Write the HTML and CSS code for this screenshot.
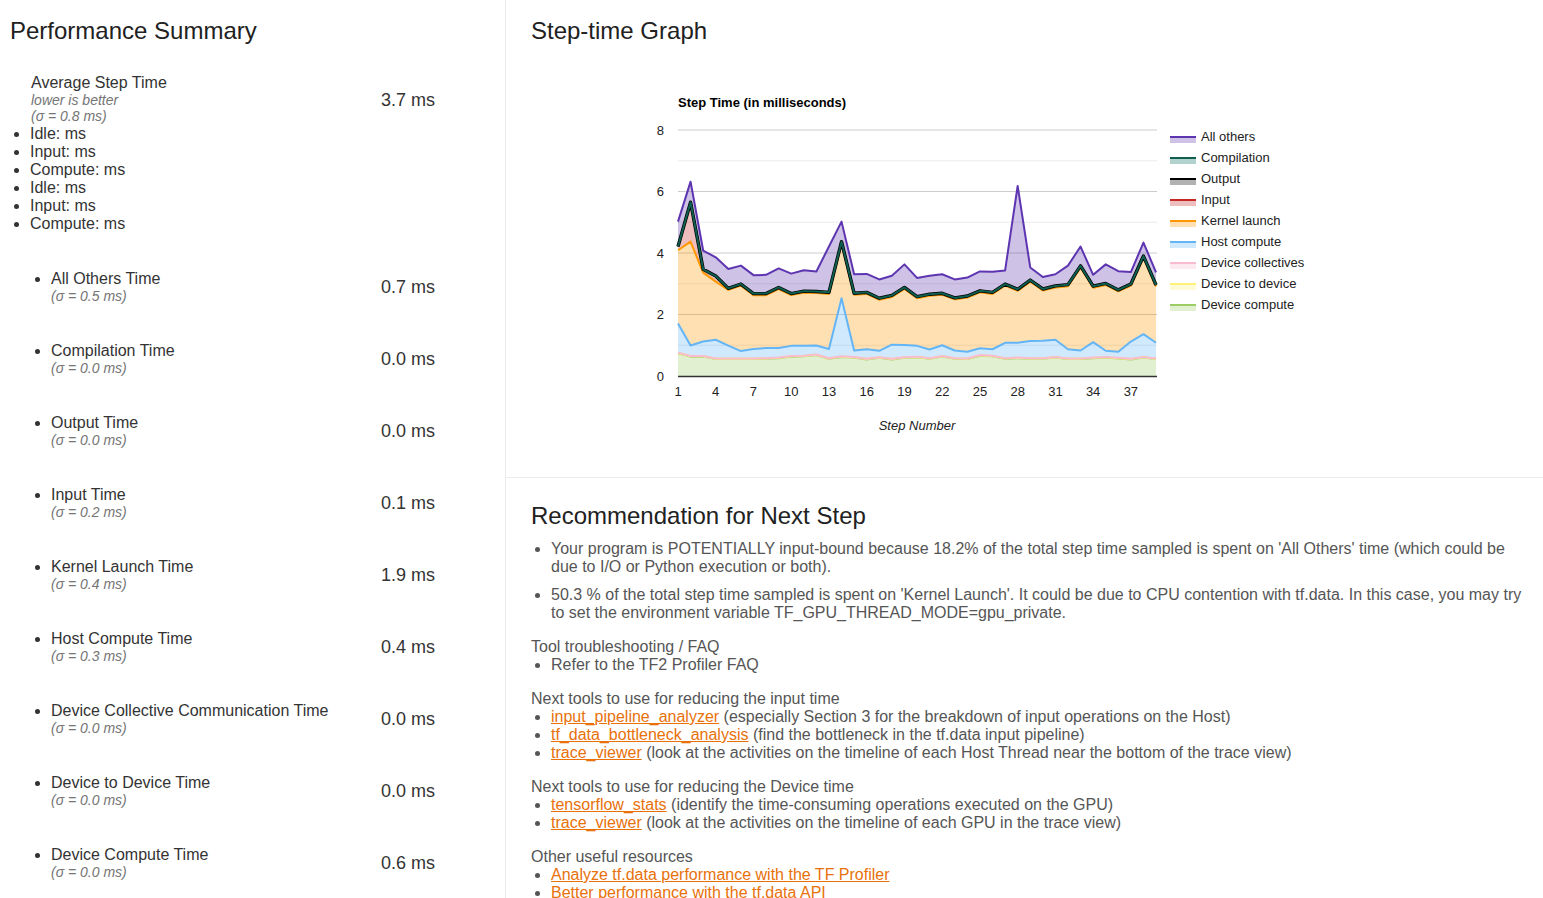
FILE: index.html
```html
<!DOCTYPE html>
<html lang="en">
<head>
<meta charset="utf-8">
<title>Overview</title>
<link rel="stylesheet" href="styles.css">
</head>
<body>
<div class="page">
  <section class="summary">
    <h2 class="title">Performance Summary</h2>
    <div class="avg">
      <div class="metric metric-avg">
        <div class="metric-label">
          <div class="metric-name">Average Step Time</div>
          <div class="note">lower is better</div>
          <div class="note">(σ = 0.8 ms)</div>
        </div>
        <div class="metric-value">3.7 ms</div>
      </div>
    </div>
    <ul class="breakdown">
      <li>Idle: ms</li>
      <li>Input: ms</li>
      <li>Compute: ms</li>
      <li>Idle: ms</li>
      <li>Input: ms</li>
      <li>Compute: ms</li>
    </ul>
    <ul class="metrics">
      <li><div class="metric"><div class="metric-label"><div class="metric-name">All Others Time</div><div class="note">(σ = 0.5 ms)</div></div><div class="metric-value">0.7 ms</div></div></li>
      <li><div class="metric"><div class="metric-label"><div class="metric-name">Compilation Time</div><div class="note">(σ = 0.0 ms)</div></div><div class="metric-value">0.0 ms</div></div></li>
      <li><div class="metric"><div class="metric-label"><div class="metric-name">Output Time</div><div class="note">(σ = 0.0 ms)</div></div><div class="metric-value">0.0 ms</div></div></li>
      <li><div class="metric"><div class="metric-label"><div class="metric-name">Input Time</div><div class="note">(σ = 0.2 ms)</div></div><div class="metric-value">0.1 ms</div></div></li>
      <li><div class="metric"><div class="metric-label"><div class="metric-name">Kernel Launch Time</div><div class="note">(σ = 0.4 ms)</div></div><div class="metric-value">1.9 ms</div></div></li>
      <li><div class="metric"><div class="metric-label"><div class="metric-name">Host Compute Time</div><div class="note">(σ = 0.3 ms)</div></div><div class="metric-value">0.4 ms</div></div></li>
      <li><div class="metric"><div class="metric-label"><div class="metric-name">Device Collective Communication Time</div><div class="note">(σ = 0.0 ms)</div></div><div class="metric-value">0.0 ms</div></div></li>
      <li><div class="metric"><div class="metric-label"><div class="metric-name">Device to Device Time</div><div class="note">(σ = 0.0 ms)</div></div><div class="metric-value">0.0 ms</div></div></li>
      <li><div class="metric"><div class="metric-label"><div class="metric-name">Device Compute Time</div><div class="note">(σ = 0.0 ms)</div></div><div class="metric-value">0.6 ms</div></div></li>
    </ul>
  </section>
  <main class="right">
    <section class="graph">
      <h2 class="title">Step-time Graph</h2>
      <svg id="chart" class="chart" width="997" height="417" viewBox="0 0 997 417" xmlns="http://www.w3.org/2000/svg"></svg>
    </section>
    <section class="rec">
      <h2 class="title">Recommendation for Next Step</h2>
      <ul class="rec-list">
        <li>Your program is POTENTIALLY input-bound because 18.2% of the total step time sampled is spent on 'All Others' time (which could be due to I/O or Python execution or both).</li>
        <li>50.3 % of the total step time sampled is spent on 'Kernel Launch'. It could be due to CPU contention with tf.data. In this case, you may try to set the environment variable TF_GPU_THREAD_MODE=gpu_private.</li>
      </ul>
      <div class="block">
        <div class="block-title">Tool troubleshooting / FAQ</div>
        <ul class="block-list">
          <li>Refer to the TF2 Profiler FAQ</li>
        </ul>
      </div>
      <div class="block">
        <div class="block-title">Next tools to use for reducing the input time</div>
        <ul class="block-list">
          <li><a class="link" href="#">input_pipeline_analyzer</a> (especially Section 3 for the breakdown of input operations on the Host)</li>
          <li><a class="link" href="#">tf_data_bottleneck_analysis</a> (find the bottleneck in the tf.data input pipeline)</li>
          <li><a class="link" href="#">trace_viewer</a> (look at the activities on the timeline of each Host Thread near the bottom of the trace view)</li>
        </ul>
      </div>
      <div class="block">
        <div class="block-title">Next tools to use for reducing the Device time</div>
        <ul class="block-list">
          <li><a class="link" href="#">tensorflow_stats</a> (identify the time-consuming operations executed on the GPU)</li>
          <li><a class="link" href="#">trace_viewer</a> (look at the activities on the timeline of each GPU in the trace view)</li>
        </ul>
      </div>
      <div class="block">
        <div class="block-title">Other useful resources</div>
        <ul class="block-list">
          <li><a class="link" href="#">Analyze tf.data performance with the TF Profiler</a></li>
          <li><a class="link" href="#">Better performance with the tf.data API</a></li>
        </ul>
      </div>
    </section>
  </main>
</div>
<script src="script.js"></script>
</body>
</html>
```

FILE: styles.css
```css
* { box-sizing: border-box; }
html, body {
  margin: 0;
  padding: 0;
  background: #ffffff;
}
body {
  font-family: "Liberation Sans", Arial, sans-serif;
  color: #333333;
}
.page {
  display: flex;
  align-items: stretch;
  width: 1543px;
}
.summary {
  flex: 0 0 506px;
  width: 506px;
  padding: 17px 0 0 10px;
  border-right: 1px solid #ebebeb;
}
.title {
  margin: 0;
  font-size: 24px;
  line-height: 28px;
  font-weight: normal;
  color: #212121;
}
.avg {
  margin-top: 28px;
  padding-left: 21px;
}
.metric {
  display: flex;
  align-items: center;
}
.metric-label {
  flex: 0 0 330px;
  width: 330px;
  padding-bottom: 1px;
}
.metric-avg .metric-label {
  flex-basis: 350px;
  width: 350px;
}
.metric-name {
  font-size: 16px;
  line-height: 20px;
  margin-bottom: -1px;
  color: #333333;
}
.note {
  font-size: 14px;
  line-height: 16px;
  font-style: italic;
  color: #757575;
}
.metric-value {
  font-size: 18px;
  line-height: 20px;
  color: #333333;
}
.metric-avg .metric-value {
  margin-top: 2px;
}
.breakdown {
  margin: 0;
  padding-left: 20px;
  font-size: 16px;
  line-height: 18px;
  color: #333333;
}
.metrics {
  margin: 36px 0 0 0;
  padding-left: 41px;
}
.metrics li {
  margin-bottom: 36px;
}
.right {
  flex: 1 1 auto;
  min-width: 0;
}
.graph {
  padding: 17px 15px 0 25px;
  border-bottom: 1px solid #ebebeb;
}
.chart {
  display: block;
  margin-top: 15px;
  font-family: "Liberation Sans", Arial, sans-serif;
}
.rec {
  padding: 24px 15px 0 25px;
  font-size: 16px;
  line-height: 18px;
  color: #555555;
}
.rec-list {
  margin: 10px 0 0 0;
  padding-left: 20px;
}
.rec-list li + li {
  margin-top: 10px;
}
.block {
  margin-top: 16px;
}
.block-list {
  margin: 0;
  padding-left: 20px;
}
.link {
  color: #e8710a;
  text-decoration: underline;
}
```

FILE: script.js
```js
(function () {
  var svg = document.getElementById('chart');
  var NS = 'http://www.w3.org/2000/svg';
  var X0 = 147, DX = 12.58, YB = 316, SY = 30.75, XR = 626;

  var purple = [5.02, 6.32, 4.08, 3.86, 3.48, 3.59, 3.28, 3.29, 3.50, 3.33, 3.44, 3.40, 4.21, 5.02, 3.31, 3.32, 3.14, 3.26, 3.63, 3.19,
    3.26, 3.31, 3.14, 3.20, 3.40, 3.39, 3.43, 6.18, 3.53, 3.22, 3.31, 3.59, 4.21, 3.29, 3.63, 3.41, 3.38, 4.34, 3.37];
  var green = [4.21, 5.65, 3.47, 3.25, 2.85, 2.99, 2.68, 2.68, 2.88, 2.68, 2.76, 2.75, 2.72, 4.37, 2.69, 2.72, 2.53, 2.62, 2.88, 2.58,
    2.66, 2.69, 2.54, 2.60, 2.77, 2.72, 2.99, 2.82, 3.12, 2.83, 2.93, 2.97, 3.58, 2.92, 3.01, 2.80, 2.99, 3.90, 2.96];
  var blue = [1.71, 0.99, 1.12, 1.18, 0.99, 0.81, 0.88, 0.91, 0.91, 0.98, 0.98, 0.99, 0.88, 2.53, 0.83, 0.87, 0.82, 1.02, 1.01, 0.98,
    0.86, 1.00, 0.83, 0.79, 0.90, 0.87, 1.08, 1.08, 1.14, 1.15, 1.18, 0.87, 0.83, 1.10, 0.82, 0.79, 1.12, 1.36, 1.08];
  var pink = [0.76, 0.65, 0.65, 0.57, 0.57, 0.57, 0.57, 0.58, 0.60, 0.65, 0.66, 0.70, 0.58, 0.64, 0.62, 0.56, 0.61, 0.56, 0.61, 0.63,
    0.58, 0.65, 0.58, 0.57, 0.68, 0.66, 0.58, 0.60, 0.58, 0.58, 0.62, 0.57, 0.57, 0.60, 0.62, 0.59, 0.56, 0.62, 0.57];
  var n = purple.length;
  var orange = green.map(function (v) { return v - 0.05; });
  orange[0] = 4.09; orange[1] = 4.37; orange[2] = 3.36; orange[3] = 3.07;

  var series = [
    { name: 'Device compute', c: '#9ccc65', w: 2, t: pink.map(function (v) { return v - 0.02; }) },
    { name: 'Device to device', c: '#fff176', w: 2, t: pink.map(function (v) { return v - 0.01; }) },
    { name: 'Device collectives', c: '#f8bbd0', w: 2, t: pink },
    { name: 'Host compute', c: '#64b5f6', w: 2, t: blue },
    { name: 'Kernel launch', c: '#ff9800', w: 2, t: orange },
    { name: 'Input', c: '#c62828', w: 2, t: green },
    { name: 'Output', c: '#000000', w: 3.4, t: green },
    { name: 'Compilation', c: '#0f5e4f', fc: '#00695c', w: 2, t: green },
    { name: 'All others', c: '#5e35b1', w: 2, t: purple }
  ];

  function el(tag, attrs, parent, text) {
    var e = document.createElementNS(NS, tag);
    for (var k in attrs) { e.setAttribute(k, attrs[k]); }
    if (text !== undefined) { e.textContent = text; }
    (parent || svg).appendChild(e);
    return e;
  }
  function px(i) { return X0 + i * DX; }
  function py(v) { return YB - v * SY; }

  el('text', { x: X0, y: 46.5, 'font-size': 13, 'font-weight': 'bold', fill: '#000' }, svg, 'Step Time (in milliseconds)');

  for (var g = 1; g <= 8; g++) {
    el('line', { x1: X0, x2: XR, y1: py(g), y2: py(g), stroke: g % 2 ? '#ebebeb' : '#cccccc', 'stroke-width': 1 });
  }

  var prev = purple.map(function () { return 0; });
  series.forEach(function (s) {
    var pts = [];
    for (var i = 0; i < n; i++) { pts.push(px(i).toFixed(2) + ',' + py(s.t[i]).toFixed(2)); }
    for (var j = n - 1; j >= 0; j--) { pts.push(px(j).toFixed(2) + ',' + py(prev[j]).toFixed(2)); }
    el('polygon', { points: pts.join(' '), fill: s.fc || s.c, 'fill-opacity': 0.3, stroke: 'none' });
    prev = s.t;
  });

  el('line', { x1: X0, x2: XR, y1: YB + 0.5, y2: YB + 0.5, stroke: '#333333', 'stroke-width': 1.4 });

  series.forEach(function (s) {
    var pts = [];
    for (var i = 0; i < n; i++) { pts.push(px(i).toFixed(2) + ',' + py(s.t[i]).toFixed(2)); }
    el('polyline', { points: pts.join(' '), fill: 'none', stroke: s.c, 'stroke-width': s.w, 'stroke-linejoin': 'round' });
  });

  for (var yv = 0; yv <= 8; yv += 2) {
    el('text', { x: 133, y: py(yv) + 4.5, 'font-size': 13, fill: '#222', 'text-anchor': 'end' }, svg, String(yv));
  }
  for (var xs = 1; xs <= 37; xs += 3) {
    el('text', { x: px(xs - 1), y: 335.5, 'font-size': 13, fill: '#222', 'text-anchor': 'middle' }, svg, String(xs));
  }
  el('text', { x: 386, y: 369.5, 'font-size': 13, 'font-style': 'italic', fill: '#222', 'text-anchor': 'middle' }, svg, 'Step Number');

  var order = series.slice().reverse();
  order.forEach(function (s, k) {
    var cy = 76 + k * 21;
    el('rect', { x: 639, y: cy, width: 26, height: 7, fill: s.fc || s.c, 'fill-opacity': 0.3 });
    el('line', { x1: 639, x2: 665, y1: cy + 1, y2: cy + 1, stroke: s.name === 'Output' ? '#000' : s.c, 'stroke-width': 2 });
    el('text', { x: 670, y: cy + 4.5, 'font-size': 13, fill: '#222' }, svg, s.name);
  });
})();
```
